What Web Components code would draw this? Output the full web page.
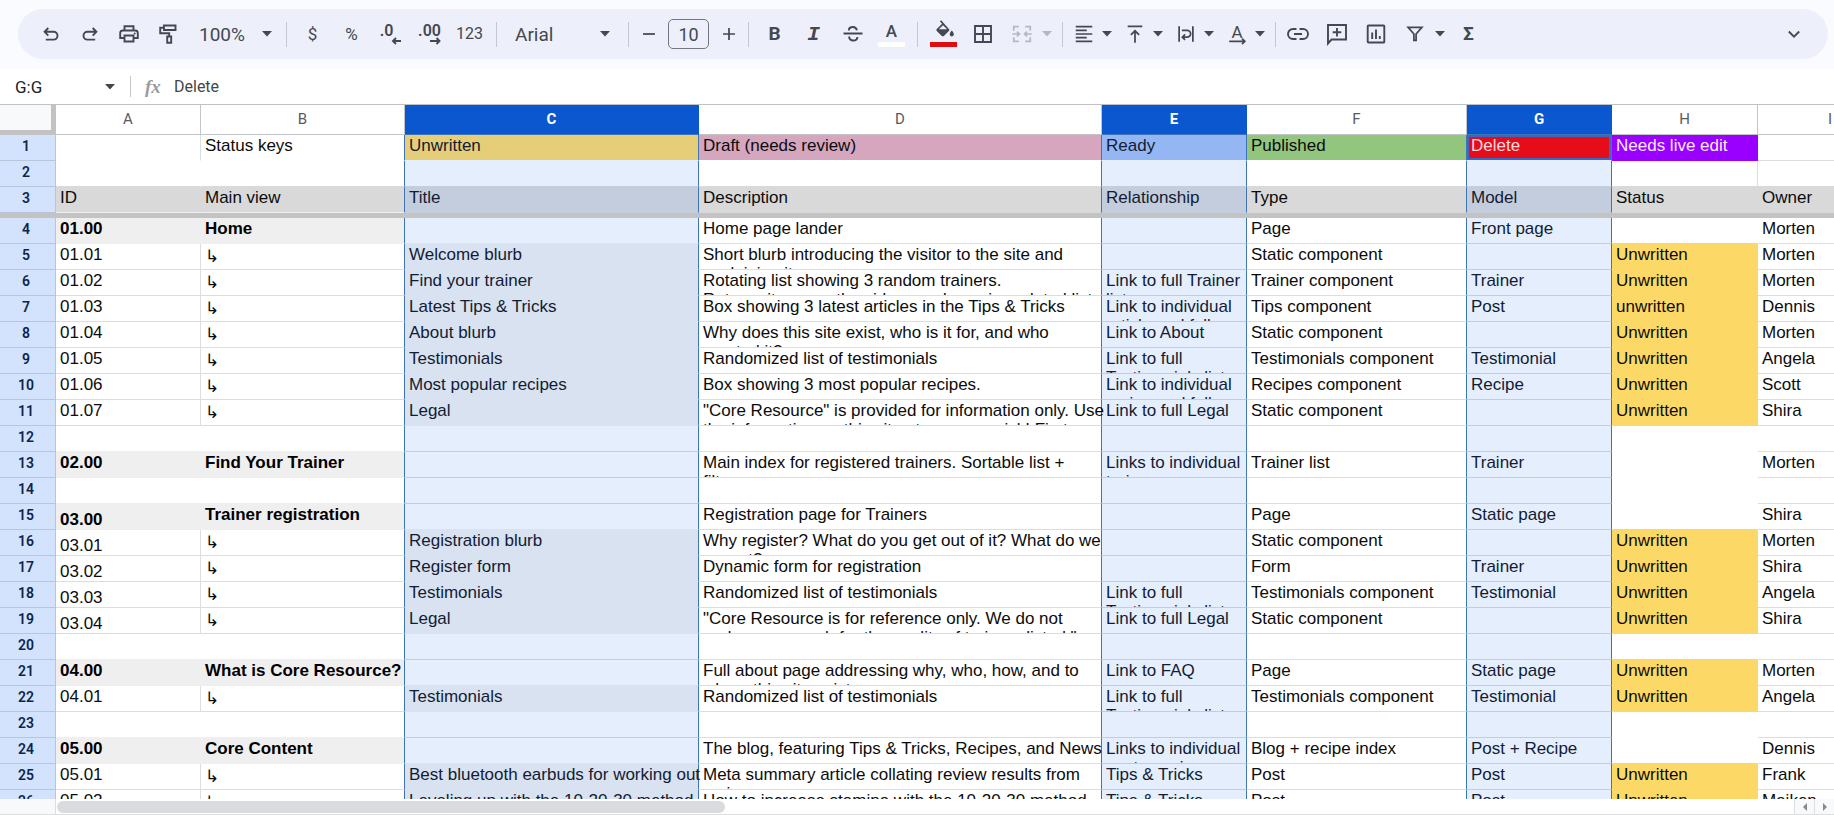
<!DOCTYPE html>
<html lang="en">
<head>
<meta charset="utf-8">
<title>Content inventory</title>
<style>
  html, body { margin: 0; height: 100%; }
  body { font-family: Roboto, "Liberation Sans", sans-serif; background: #fff; overflow: hidden; }
</style>
</head>
<body>
<sheet-app></sheet-app>

<script>
const ICONS = {
  undo: '<path class="s" d="M9.3 6 5.6 9.8l3.7 3.8M5.6 9.8h9a3.9 3.9 0 0 1 0 7.8H6.8"/>',
  redo: '<path class="s" d="M14.7 6l3.7 3.8-3.7 3.8M18.4 9.8h-9a3.9 3.9 0 0 0 0 7.8h7.8"/>',
  print: '<path class="s" d="M7.5 8V4.2h9V8M7 16H3.200V11a2.600 2.600 0 0 1 2.600-2.500h12.400a2.600 2.600 0 0 1 2.600 2.500v5H17M7.500 13.500h9v6h-9z"/><circle cx="17.700" cy="11.500" r="1"/>',
  paint: '<path class="s" d="M8 3.500h11.500v4.500H8zM8 5.700H4.200V11.300h9v3.200M11.200 14.500h4v6.200h-4z"/>',
  decLess: '<path class="s" d="M22 19h-8M17 16l-3 3 3 3"/>',
  decMore: '<path class="s" d="M12 19h9M18.500 16l3 3-3 3"/>',
  minus: '<path class="s" d="M5.500 12h13"/>',
  plus: '<path class="s" d="M5.500 12h13M12 5.500v13"/>',
  strike: '<path class="s" d="M2.500 11.500h19M16 8.300C15.300 6 13.800 5 12 5 9.800 5 7.800 6.200 7.800 8.500M8 14.500c.4 2.700 2 4 4.200 4 2.300 0 4.200-1.300 4.200-3.500"/>',
  fill: '<path d="M9.200 1.200 7.900 2.500l2.200 2.200-5.300 5.200c-.6.6-.6 1.500 0 2.100l5 4.900c.6.6 1.500.6 2.100 0l5-4.900c.6-.6.6-1.500 0-2.100zM11 6.200l4.100 4H6.900z" fill-rule="evenodd"/><path d="M19.800 11.500s-2.100 2.400-2.100 3.800a2.100 2.100 0 0 0 4.200 0c0-1.400-2.100-3.800-2.100-3.800z"/>',
  borders: '<path class="s" d="M4 4h16v16H4zM12 4v16M4 12h16"/>',
  merge: '<path class="s" d="M3 8.500V4h5.500M15.500 4H21v4.500M21 15.500V20h-5.500M8.500 20H3v-4.500M1.500 12H9M6.500 9.300 9.200 12l-2.700 2.700M22.500 12H15M17.500 9.300 14.800 12l2.700 2.700"/>',
  align: '<path class="s" d="M3 4h18M3 8h12M3 12h18M3 16h12M3 20h18"/>',
  valign: '<path class="s" d="M4 3.700h16M12 21.500V8.500M7.500 13 12 8.500l4.500 4.500"/>',
  wrap: '<path class="s" d="M4.500 3.500v17M19.500 3.500v17M7.500 8h5.800a3.400 3.400 0 0 1 0 7.500H8M11 12.500l-3 3 3 3"/>',
  rotate: '<path class="s" d="M3.500 20h17M17.500 17l3 3-3 3"/>',
  link: '<path class="s" d="M10.500 7H7a5 5 0 0 0 0 10h3.500M13.500 7H17a5 5 0 0 1 0 10h-3.500M8 12h8"/>',
  comment: '<path class="s" d="M3 21.500V3h18v14.500H6.500zM12 6v8.500M7.700 10.200h8.600"/>',
  chart: '<path class="s" d="M4.500 3.500h15a.8.8 0 0 1 .8.8v15.400a.8.8 0 0 1-.8.8h-15a.8.800 0 0 1-.8-.8V4.300a.8.800 0 0 1 .8-.8zM8.200 10.500V17M12 7.500V17M15.800 14v3"/>',
  filter: '<path class="s" d="M4.500 4.800h15L13.200 12v7h-2.400v-7z"/>',
  chevron: '<path class="s" d="m6.800 9.500 5.200 5.200 5.200-5.200"/>'
};
const icon = (name, cls = '') => `<svg class="${cls}" viewBox="0 0 24 24" aria-hidden="true">${ICONS[name]}</svg>`;
const CARET = '<svg class="caret" viewBox="0 0 10 6" aria-hidden="true"><path d="M0 0h10L5 5.500z"/></svg>';
const CONTROL_CSS = `
  svg { width: 24px; height: 24px; fill: currentColor; display: block; }
  svg .s { fill: none; stroke: currentColor; stroke-width: 1.900; }
  svg.caret { width: 10px; height: 6px; }
  button, input, select { font: inherit; color: inherit; background: none; border: 0; padding: 0; margin: 0; outline: 0; }
  select { appearance: none; }
`;

/* A toolbar button holding an icon, a text glyph, or both. */
class ToolButton extends HTMLElement {
  connectedCallback() {
    const name = this.getAttribute('icon');
    this.attachShadow({ mode: 'open' }).innerHTML = `
      <style>${CONTROL_CSS}
        :host { display: block; flex: none; width: 39px; }
        :host([narrow]) { width: 27px; }
        :host([small]) { width: 41px; }
        button { width: 100%; height: 40px; display: grid; place-items: center; font-size: 17px; line-height: 24px; }
        button > * { grid-area: 1 / 1; }
        :host([narrow]) svg { width: 22px; height: 22px; }
        :host([bold]) button { font-size: 19px; font-weight: 700; }
        :host([italic]) button { font: italic 700 21px "Liberation Mono", monospace; }
        :host([small]) button { font-size: 16px; }
        :host([decimal]) button { font-size: 16px; font-weight: 600; }
        :host([decimal]) .label { align-self: start; margin-top: 5px; }
        :host([decimal="less"]) .label { margin-right: 8px; }
        .bar { align-self: end; width: 27px; height: 5px; margin-bottom: 7px; background: var(--swatch); }
        :host(:not([swatch])) .bar { display: none; }
        :host([swatch]) svg, :host([swatch]) .label { align-self: start; margin-top: 5px; }
        :host([swatch]) .label { font-weight: 500; }
      </style>
      <button type="button" aria-label="${this.getAttribute('label')}">
        ${name ? icon(name) : ''}<span class="label"><slot></slot></span><span class="bar"></span>
      </button>`;
  }
}
customElements.define('tool-button', ToolButton);

/* An icon button with a drop-down arrow. */
class ToolMenu extends HTMLElement {
  connectedCallback() {
    this.attachShadow({ mode: 'open' }).innerHTML = `
      <style>${CONTROL_CSS}
        :host { display: block; flex: none; width: 51px; }
        :host([wide]) { width: 54px; }
        :host([dim]) { color: #b4b8c2; }
        button { width: 100%; height: 40px; display: flex; align-items: center; gap: 6px; padding-left: 3px; }
        :host([wide]) button { padding-left: 8px; gap: 8px; }
        .pic { display: grid; place-items: center; width: 24px; height: 24px; font-size: 17px; line-height: 20px; }
        .pic > * { grid-area: 1 / 1; }
        .pic span { align-self: start; }
        svg { width: 22px; height: 22px; }
      </style>
      <button type="button" aria-haspopup="menu" aria-label="${this.getAttribute('label')}">
        <span class="pic">${icon(this.getAttribute('icon'))}<span><slot></slot></span></span>${CARET}
      </button>`;
  }
}
customElements.define('tool-menu', ToolMenu);

/* A native select with the toolbar's own arrow. */
class ToolSelect extends HTMLElement {
  connectedCallback() {
    this.attachShadow({ mode: 'open' }).innerHTML = `
      <style>${CONTROL_CSS}
        :host { display: grid; align-items: center; flex: none; width: 93px; }
        :host([wide]) { width: 119px; }
        select { grid-area: 1 / 1; height: 40px; font-size: 19px; padding: 0 12px; }
        .caret { grid-area: 1 / 1; justify-self: end; margin-right: 8px; pointer-events: none; }
        :host([wide]) .caret { margin-right: 12px; }
      </style>
      <select aria-label="${this.getAttribute('label')}">${this.getAttribute('options').split(',').map(o => `<option>${o}</option>`).join('')}</select>${CARET}`;
  }
}
customElements.define('tool-select', ToolSelect);

class ToolBar extends HTMLElement {
  connectedCallback() {
    this.attachShadow({ mode: 'open' }).innerHTML = `
      <style>${CONTROL_CSS}
        :host { display: block; padding: 9px 6px 10px 18px; background: #f9fbfe; color: #444850; }
        .bar { height: 50px; border-radius: 25px; background: #edf0fa; display: flex; align-items: center; padding: 0 15px 0 13px; }
        .sep { flex: none; width: 1px; height: 25px; margin: 0 6px; background: #c3c7d2; }
        .sep.tight { margin: 0 2px; }
        .size { flex: none; box-sizing: border-box; width: 41px; height: 30px; margin: 0 6px; border: 1px solid #747780; border-radius: 5px; text-align: center; font-size: 18px; }
        .more { margin-left: auto; }
      </style>
      <div class="bar" role="toolbar" aria-label="Main">
        <tool-button icon="undo" label="Undo"></tool-button>
        <tool-button icon="redo" label="Redo"></tool-button>
        <tool-button icon="print" label="Print"></tool-button>
        <tool-button icon="paint" label="Paint format"></tool-button>
        <tool-select label="Zoom" options="100%,75%,50%"></tool-select>
        <span class="sep"></span>
        <tool-button label="Format as currency">$</tool-button>
        <tool-button label="Format as percent">%</tool-button>
        <tool-button decimal="less" icon="decLess" label="Decrease decimal places">.0</tool-button>
        <tool-button decimal="more" icon="decMore" label="Increase decimal places">.00</tool-button>
        <tool-button small label="More formats">123</tool-button>
        <span class="sep"></span>
        <tool-select wide label="Font" options="Arial,Roboto,Lato"></tool-select>
        <span class="sep"></span>
        <tool-button narrow icon="minus" label="Decrease font size"></tool-button>
        <input class="size" type="text" value="10" aria-label="Font size">
        <tool-button narrow icon="plus" label="Increase font size"></tool-button>
        <span class="sep"></span>
        <tool-button bold label="Bold">B</tool-button>
        <tool-button italic label="Italic">I</tool-button>
        <tool-button icon="strike" label="Strikethrough"></tool-button>
        <tool-button swatch style="--swatch:#fff" label="Text color">A</tool-button>
        <span class="sep"></span>
        <tool-button swatch icon="fill" style="--swatch:#e10b12" label="Fill color"></tool-button>
        <tool-button icon="borders" label="Borders"></tool-button>
        <tool-menu wide dim icon="merge" label="Merge cells"></tool-menu>
        <span class="sep"></span>
        <tool-menu icon="align" label="Horizontal align"></tool-menu>
        <tool-menu icon="valign" label="Vertical align"></tool-menu>
        <tool-menu icon="wrap" label="Text wrapping"></tool-menu>
        <tool-menu icon="rotate" label="Text rotation">A</tool-menu>
        <span class="sep tight"></span>
        <tool-button icon="link" label="Insert link"></tool-button>
        <tool-button icon="comment" label="Insert comment"></tool-button>
        <tool-button icon="chart" label="Insert chart"></tool-button>
        <tool-menu wide icon="filter" label="Create a filter"></tool-menu>
        <tool-button bold label="Functions">Σ</tool-button>
        <tool-button class="more" icon="chevron" label="Hide the menus"></tool-button>
      </div>`;
  }
}
customElements.define('tool-bar', ToolBar);

class FormulaBar extends HTMLElement {
  connectedCallback() {
    this.attachShadow({ mode: 'open' }).innerHTML = `
      <style>${CONTROL_CSS}
        :host { display: flex; align-items: center; height: 35px; color: #444746; font-size: 16px; }
        .name { width: 85px; padding-left: 15px; color: #202124; font-size: 17px; }
        button { width: 20px; height: 24px; display: grid; place-items: center; }
        .sep { width: 1px; height: 21px; margin: 0 14px 0 10px; background: #c4c7c5; }
        .fx { width: 29px; font: italic 700 19px "Liberation Serif", serif; color: #9a9c9e; }
        .formula { flex: 1; min-width: 0; }
      </style>
      <input class="name" type="text" value="G:G" aria-label="Name box">
      <button type="button" aria-label="Named ranges">${CARET}</button>
      <span class="sep"></span>
      <label class="fx" for="formula">fx</label>
      <input class="formula" id="formula" type="text" value="Delete">`;
  }
}
customElements.define('formula-bar', FormulaBar);

const COLUMNS = [['A', 145], ['B', 204], ['C', 294, 1], ['D', 403], ['E', 145, 1], ['F', 220], ['G', 145, 1], ['H', 146], ['I', 145]];
const ARROW = '↳', TODO = 'Unwritten';
/* Cell text by row; "\n" starts a wrapped line that the row height cuts off. */
const ROWS = [
  ['', 'Status keys', 'Unwritten', 'Draft (needs review)', 'Ready', 'Published', 'Delete', 'Needs live edit', ''],
  [],
  ['ID', 'Main view', 'Title', 'Description', 'Relationship', 'Type', 'Model', 'Status', 'Owner'],
  ['01.00', 'Home', '', 'Home page lander', '', 'Page', 'Front page', '', 'Morten'],
  ['01.01', ARROW, 'Welcome blurb', 'Short blurb introducing the visitor to the site and\nexplaining it.', '', 'Static component', '', TODO, 'Morten'],
  ['01.02', ARROW, 'Find your trainer', 'Rotating list showing 3 random trainers.\nReturns items on the side as a dynamic updated list', 'Link to full Trainer\nlist', 'Trainer component', 'Trainer', TODO, 'Morten'],
  ['01.03', ARROW, 'Latest Tips & Tricks', 'Box showing 3 latest articles in the Tips & Tricks', 'Link to individual\narticle and full', 'Tips component', 'Post', 'unwritten', 'Dennis'],
  ['01.04', ARROW, 'About blurb', 'Why does this site exist, who is it for, and who\ncreated it?', 'Link to About', 'Static component', '', TODO, 'Morten'],
  ['01.05', ARROW, 'Testimonials', 'Randomized list of testimonials', 'Link to full\nTestimonials list', 'Testimonials component', 'Testimonial', TODO, 'Angela'],
  ['01.06', ARROW, 'Most popular recipes', 'Box showing 3 most popular recipes.', 'Link to individual\nrecipe and full', 'Recipes component', 'Recipe', TODO, 'Scott'],
  ['01.07', ARROW, 'Legal', '"Core Resource" is provided for information only. Use\nthe information on this site at your own risk! First', 'Link to full Legal', 'Static component', '', TODO, 'Shira'],
  [],
  ['02.00', 'Find Your Trainer', '', 'Main index for registered trainers. Sortable list +\nfilters', 'Links to individual\ntrainers', 'Trainer list', 'Trainer', '', 'Morten'],
  [],
  ['03.00', 'Trainer registration', '', 'Registration page for Trainers', '', 'Page', 'Static page', '', 'Shira'],
  ['03.01', ARROW, 'Registration blurb', 'Why register? What do you get out of it? What do we\nexpect?', '', 'Static component', '', TODO, 'Morten'],
  ['03.02', ARROW, 'Register form', 'Dynamic form for registration', '', 'Form', 'Trainer', TODO, 'Shira'],
  ['03.03', ARROW, 'Testimonials', 'Randomized list of testimonials', 'Link to full\nTestimonials list', 'Testimonials component', 'Testimonial', TODO, 'Angela'],
  ['03.04', ARROW, 'Legal', '"Core Resource is for reference only. We do not\nendorse or vouch for the quality of trainers listed."', 'Link to full Legal', 'Static component', '', TODO, 'Shira'],
  [],
  ['04.00', 'What is Core Resource?', '', 'Full about page addressing why, who, how, and to\nwhom this site exists', 'Link to FAQ', 'Page', 'Static page', TODO, 'Morten'],
  ['04.01', ARROW, 'Testimonials', 'Randomized list of testimonials', 'Link to full\nTestimonials list', 'Testimonials component', 'Testimonial', TODO, 'Angela'],
  [],
  ['05.00', 'Core Content', '', 'The blog, featuring Tips & Tricks, Recipes, and News', 'Links to individual\nposts, recipes', 'Blog + recipe index', 'Post + Recipe', '', 'Dennis'],
  ['05.01', ARROW, 'Best bluetooth earbuds for working out', 'Meta summary article collating review results from\nvarious', 'Tips & Tricks', 'Post', 'Post', TODO, 'Frank'],
  ['05.02', ARROW, 'Leveling up with the 10-20-30 method', 'How to increase stamina with the 10-20-30 method', 'Tips & Tricks', 'Post', 'Post', TODO, 'Maiken']
];
const KEY_FILLS = ['', '', '#e6cd77', '#d5a6bd', '#94b6f3', '#92c57e', '#e60c18', '#9900ff', ''];
const isSection = r => r > 2 && /\.00$/.test((ROWS[r] || [])[0] || '');

function fillOf(r, c) {
  const text = (ROWS[r] || [])[c];
  if (r === 0) return KEY_FILLS[c];
  if (r === 2) return COLUMNS[c][2] ? '#c4cddd' : '#d9d9d9';
  if (isSection(r) && c < 2) return '#efefef';
  if (r > 2 && c === 2 && text) return '#d9e2f0';
  if (r > 2 && c === 7 && text) return '#fcd966';
  return '';
}
function ruleOf(r, c) {
  const fill = fillOf(r + 1, c) || fillOf(r, c);
  if (fill && r !== 0) return fill;
  if (r === 0) return c === 8 ? '#dcdfe0' : fill && c === 7 ? fill : COLUMNS[c][2] ? '#e5eefd' : '#fff';
  if (c === 7) return '#fff';
  return COLUMNS[c][2] ? '#c2cede' : '#dadede';
}
function edgeOf(r, c) {
  if (COLUMNS[c][2] || (COLUMNS[c + 1] || [])[2]) return '#3f75b5';
  if (c === 0 && (ROWS[r] || [])[1] && !fillOf(r, c)) return '#dadede';
  if (c === 7 && r === 1) return '#dadede';
  return fillOf(r, c) || '#fff';
}
const esc = s => s.replace(/&/g, '&amp;').replace(/"/g, '&quot;').replace(/\n/g, '<br>');

class SheetGrid extends HTMLElement {
  connectedCallback() {
    const row = r => `<tr><th scope="row">${r + 1}</th>${COLUMNS.map(([, , sel], c) => {
      const text = ROWS[r][c] || '';
      const cls = [sel && 'sel', isSection(r) && c < 2 && 'strong', c === 0 && r >= 14 && r <= 18 && 'low',
        text === ARROW && 'arrow', r === 0 && c === 6 && 'active', r === 0 && c === 7 && 'light'].filter(Boolean).join(' ');
      return `<td class="${cls}" style="background-color:${fillOf(r, c) || (sel ? '#e5eefd' : '#fff')};border-color:${edgeOf(r, c)} ${edgeOf(r, c)} ${ruleOf(r, c)}"><div>${esc(text)}</div></td>`;
    }).join('')}</tr>`;
    this.attachShadow({ mode: 'open' }).innerHTML = `
      <style>
        :host { display: block; flex: 1; min-height: 0; overflow: hidden; border-top: 1px solid #bfc1c2; }
        table { table-layout: fixed; border-collapse: separate; border-spacing: 0; width: 1903px; }
        th, td { box-sizing: border-box; padding: 0; border: 0 solid; }
        thead th { height: 30px; padding-bottom: 2px; font-size: 15px; font-weight: 400; color: #575b5f; background: #fff; border-width: 0 1px 1px 0; border-color: #c2c4c5; }
        thead th.sel { background: #0b57d0; color: #fff; font-weight: 700; border-color: #3f75b5; border-right-color: #0b57d0; }
        thead .corner { background: #f8f9fa; border: 0 solid #c2c2c2; border-width: 0 5px 5px 0; }
        tbody th { height: 26px; font-size: 14px; line-height: 16px; font-weight: 600; color: #0a2550; background: #d3e3fd; border-width: 0 1px 1px 0; border-color: #b9c6da; padding: 0 3px 3px 0; }
        td { height: 26px; border-width: 0 1px 1px 0; vertical-align: top; font: 17px "Liberation Sans", Arial, sans-serif; color: #0c0c0c; }
        td div { box-sizing: border-box; height: 25px; padding: 1px 0 0 4px; line-height: 19px; white-space: nowrap; overflow: visible clip; }
        .low div { padding-top: 6px; }
        .arrow div { font-family: "DejaVu Sans", sans-serif; font-weight: 200; line-height: 22px; }
        .sel { color: #121c33; }
        .strong { font-weight: 700; color: #000; }
        .light { color: #fbeaff; }
        .active { color: #f7dbe2; box-shadow: inset 0 0 0 2px #3c66c4; }
        .freeze td { height: 5px; background: #c3c3c3; border: 0; }
      </style>
      <table>
        <colgroup><col style="width:56px">${COLUMNS.map(([, w]) => `<col style="width:${w}px">`).join('')}</colgroup>
        <thead><tr><th class="corner" aria-label="Select all"></th>${COLUMNS.map(([n, , sel]) => `<th scope="col" class="${sel ? 'sel' : ''}">${n}</th>`).join('')}</tr></thead>
        <tbody>${[0, 1, 2].map(row).join('')}<tr class="freeze"><td colspan="10"></td></tr></tbody>
        <tbody>${ROWS.map((_, r) => r).slice(3).map(row).join('')}</tbody>
      </table>`;
  }
}
customElements.define('sheet-grid', SheetGrid);

class ScrollStrip extends HTMLElement {
  connectedCallback() {
    this.attachShadow({ mode: 'open' }).innerHTML = `
      <style>${CONTROL_CSS}
        :host { display: flex; align-items: center; flex: none; height: 15px; border-bottom: 1px solid #dcdedf; background: #fff; }
        .gutter { align-self: stretch; width: 55px; border-right: 1px solid #dcdedf; background: #f8f9fa; }
        .track { flex: 1; padding: 0 1px; }
        .thumb { width: calc(100% * 5 / 13); min-width: 40px; height: 12px; border-radius: 6px; background: #dadbde; }
        button { width: 20px; height: 15px; border-left: 1px solid #dcdedf; background: #f8f9fa; color: #85888b; display: grid; place-items: center; }
        button svg { width: 6px; height: 8px; }
      </style>
      <div class="gutter"></div>
      <div class="track"><div class="thumb"></div></div>
      <button type="button" aria-label="Scroll left"><svg viewBox="0 0 6 8"><path d="M5 0v8L1 4z"/></svg></button>
      <button type="button" aria-label="Scroll right"><svg viewBox="0 0 6 8"><path d="M1 0v8l4-4z"/></svg></button>`;
  }
}
customElements.define('scroll-strip', ScrollStrip);

class SheetApp extends HTMLElement {
  connectedCallback() {
    this.attachShadow({ mode: 'open' }).innerHTML = `
      <style>:host { display: flex; flex-direction: column; height: 100vh; }</style>
      <tool-bar></tool-bar>
      <formula-bar></formula-bar>
      <sheet-grid></sheet-grid>
      <scroll-strip></scroll-strip>`;
  }
}
customElements.define('sheet-app', SheetApp);
</script>
</body>
</html>
